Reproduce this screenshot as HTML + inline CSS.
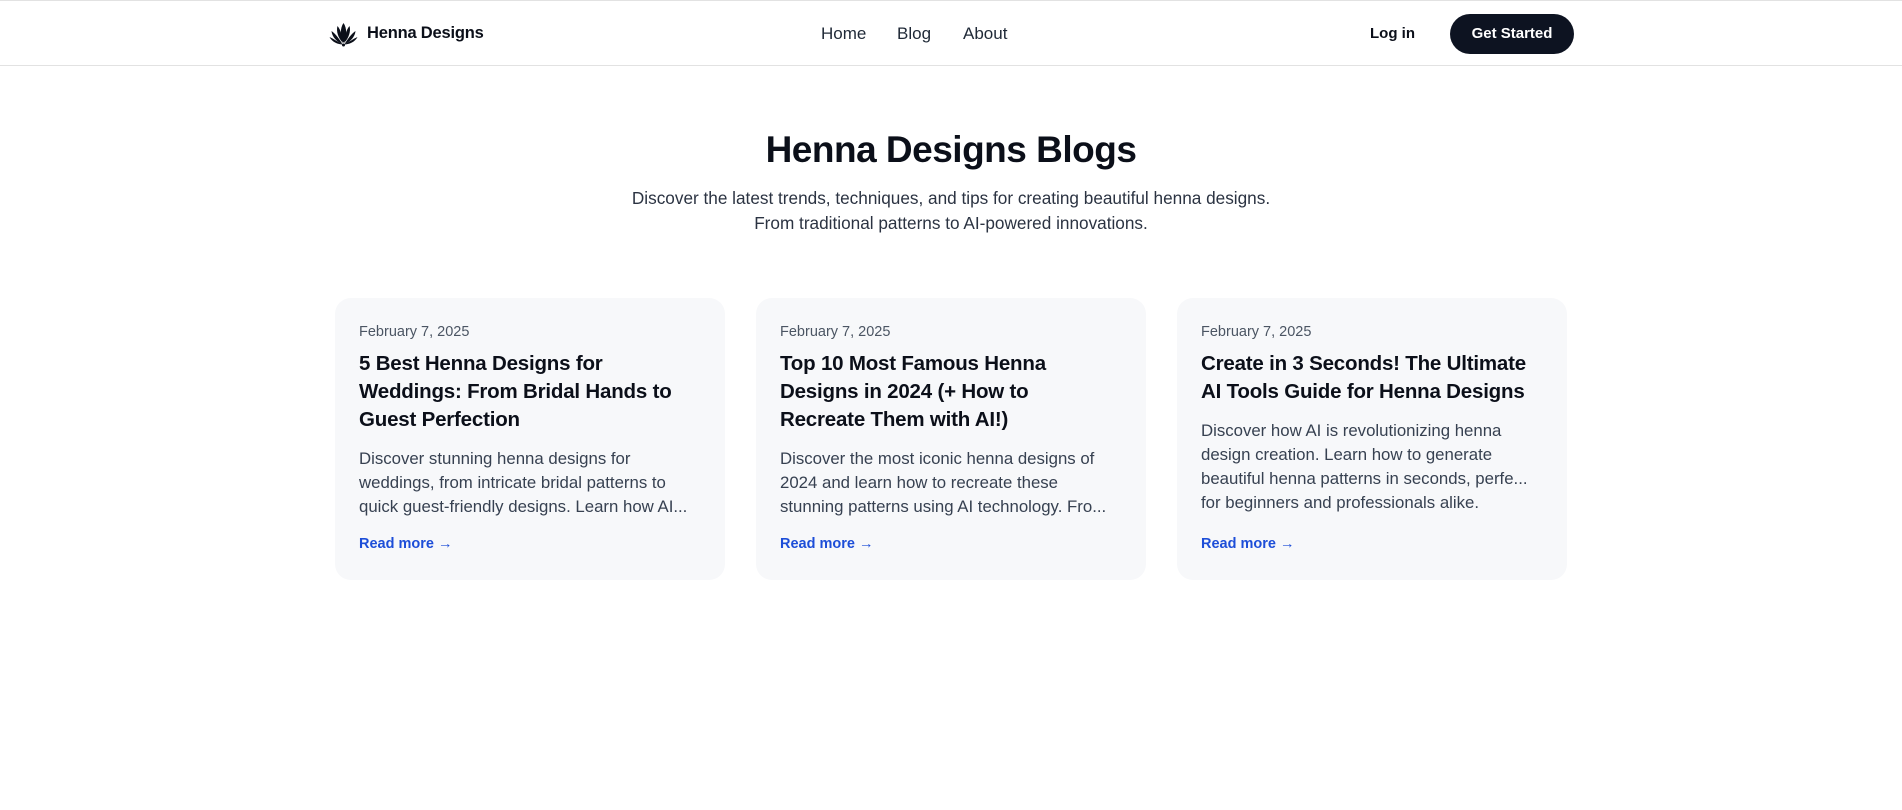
<!DOCTYPE html>
<html><head><meta charset="utf-8"><style>
*{margin:0;padding:0;box-sizing:border-box}
body{width:1902px;height:810px;background:#fff;font-family:"Liberation Sans",Arial,sans-serif;color:#0b0f19;position:relative;overflow:hidden}
.hdr{position:absolute;left:0;top:0;width:1902px;height:66px;border-top:1px solid #e2e2e2;border-bottom:1px solid #e2e2e2}
.logo{position:absolute;left:329px;top:20px}
.brand{position:absolute;left:367px;top:23px;font-size:16.5px;font-weight:700;letter-spacing:-0.2px}
.nav a{position:absolute;top:23px;font-size:17px;color:#1f2937;text-decoration:none}
.login{position:absolute;left:1370px;top:24px;font-size:15px;font-weight:700}
.btn{position:absolute;left:1450px;top:13px;width:124px;height:40px;border-radius:20px;background:#0d1321;color:#fff;font-size:15px;font-weight:700;text-align:center;line-height:40px}
h1{position:absolute;left:0;width:1902px;top:129px;text-align:center;font-size:37px;font-weight:700;letter-spacing:-0.5px}
.sub{position:absolute;left:0;width:1902px;top:186px;text-align:center;font-size:17.2px;line-height:25px;color:#2b3342}
.card{position:absolute;top:298px;width:390px;height:282px;background:#f7f8fa;border-radius:16px;padding:25px 24px}
.date{font-size:14.5px;color:#4b5563;line-height:18px;margin-bottom:9px}
.t{font-size:20.5px;font-weight:700;line-height:28px;white-space:nowrap;letter-spacing:-0.2px}
.d{font-size:16.8px;line-height:24px;color:#374151;white-space:nowrap;margin-top:13px}
.rm{position:absolute;left:24px;top:238px;font-size:14.5px;color:#1d4ed8;font-weight:600}
</style></head><body>
<div class="hdr">
<svg class="logo" width="29" height="26" viewBox="0 0 29 26">
<g fill="#0b0f19">
<path d="M14.5 2 C11 7 11 15 14.5 22 C18 15 18 7 14.5 2Z"/>
<path d="M8.5 5 C7 10 9 17 14 22 C13 15 12 9 8.5 5Z"/>
<path d="M20.5 5 C22 10 20 17 15 22 C16 15 17 9 20.5 5Z"/>
<path d="M2.5 10 C3 16 8 21 13.5 23 C10 18 7 13 2.5 10Z"/>
<path d="M26.5 10 C26 16 21 21 15.5 23 C19 18 22 13 26.5 10Z"/>
<path d="M0.5 16 C3 21 9 23.5 14 23.5 C9 21 5 18 0.5 16Z"/>
<path d="M28.5 16 C26 21 20 23.5 15 23.5 C20 21 24 18 28.5 16Z"/>
<circle cx="14.5" cy="24" r="1.5"/>
</g></svg>
<div class="brand">Henna Designs</div>
<div class="nav"><a style="left:821px">Home</a><a style="left:897px">Blog</a><a style="left:963px">About</a></div>
<div class="login">Log in</div>
<div class="btn">Get Started</div>
</div>
<h1>Henna Designs Blogs</h1>
<div class="sub">Discover the latest trends, techniques, and tips for creating beautiful henna designs.<br>From traditional patterns to AI-powered innovations.</div>

<div class="card" style="left:335px">
<div class="date">February 7, 2025</div>
<div class="t">5 Best Henna Designs for<br>Weddings: From Bridal Hands to<br>Guest Perfection</div>
<div class="d">Discover stunning henna designs for<br>weddings, from intricate bridal patterns to<br>quick guest-friendly designs. Learn how AI...</div>
<div class="rm">Read more →</div>
</div>
<div class="card" style="left:756px">
<div class="date">February 7, 2025</div>
<div class="t">Top 10 Most Famous Henna<br>Designs in 2024 (+ How to<br>Recreate Them with AI!)</div>
<div class="d">Discover the most iconic henna designs of<br>2024 and learn how to recreate these<br>stunning patterns using AI technology. Fro...</div>
<div class="rm">Read more →</div>
</div>
<div class="card" style="left:1177px">
<div class="date">February 7, 2025</div>
<div class="t">Create in 3 Seconds! The Ultimate<br>AI Tools Guide for Henna Designs</div>
<div class="d">Discover how AI is revolutionizing henna<br>design creation. Learn how to generate<br>beautiful henna patterns in seconds, perfe...<br>for beginners and professionals alike.</div>
<div class="rm">Read more →</div>
</div>
</body></html>
